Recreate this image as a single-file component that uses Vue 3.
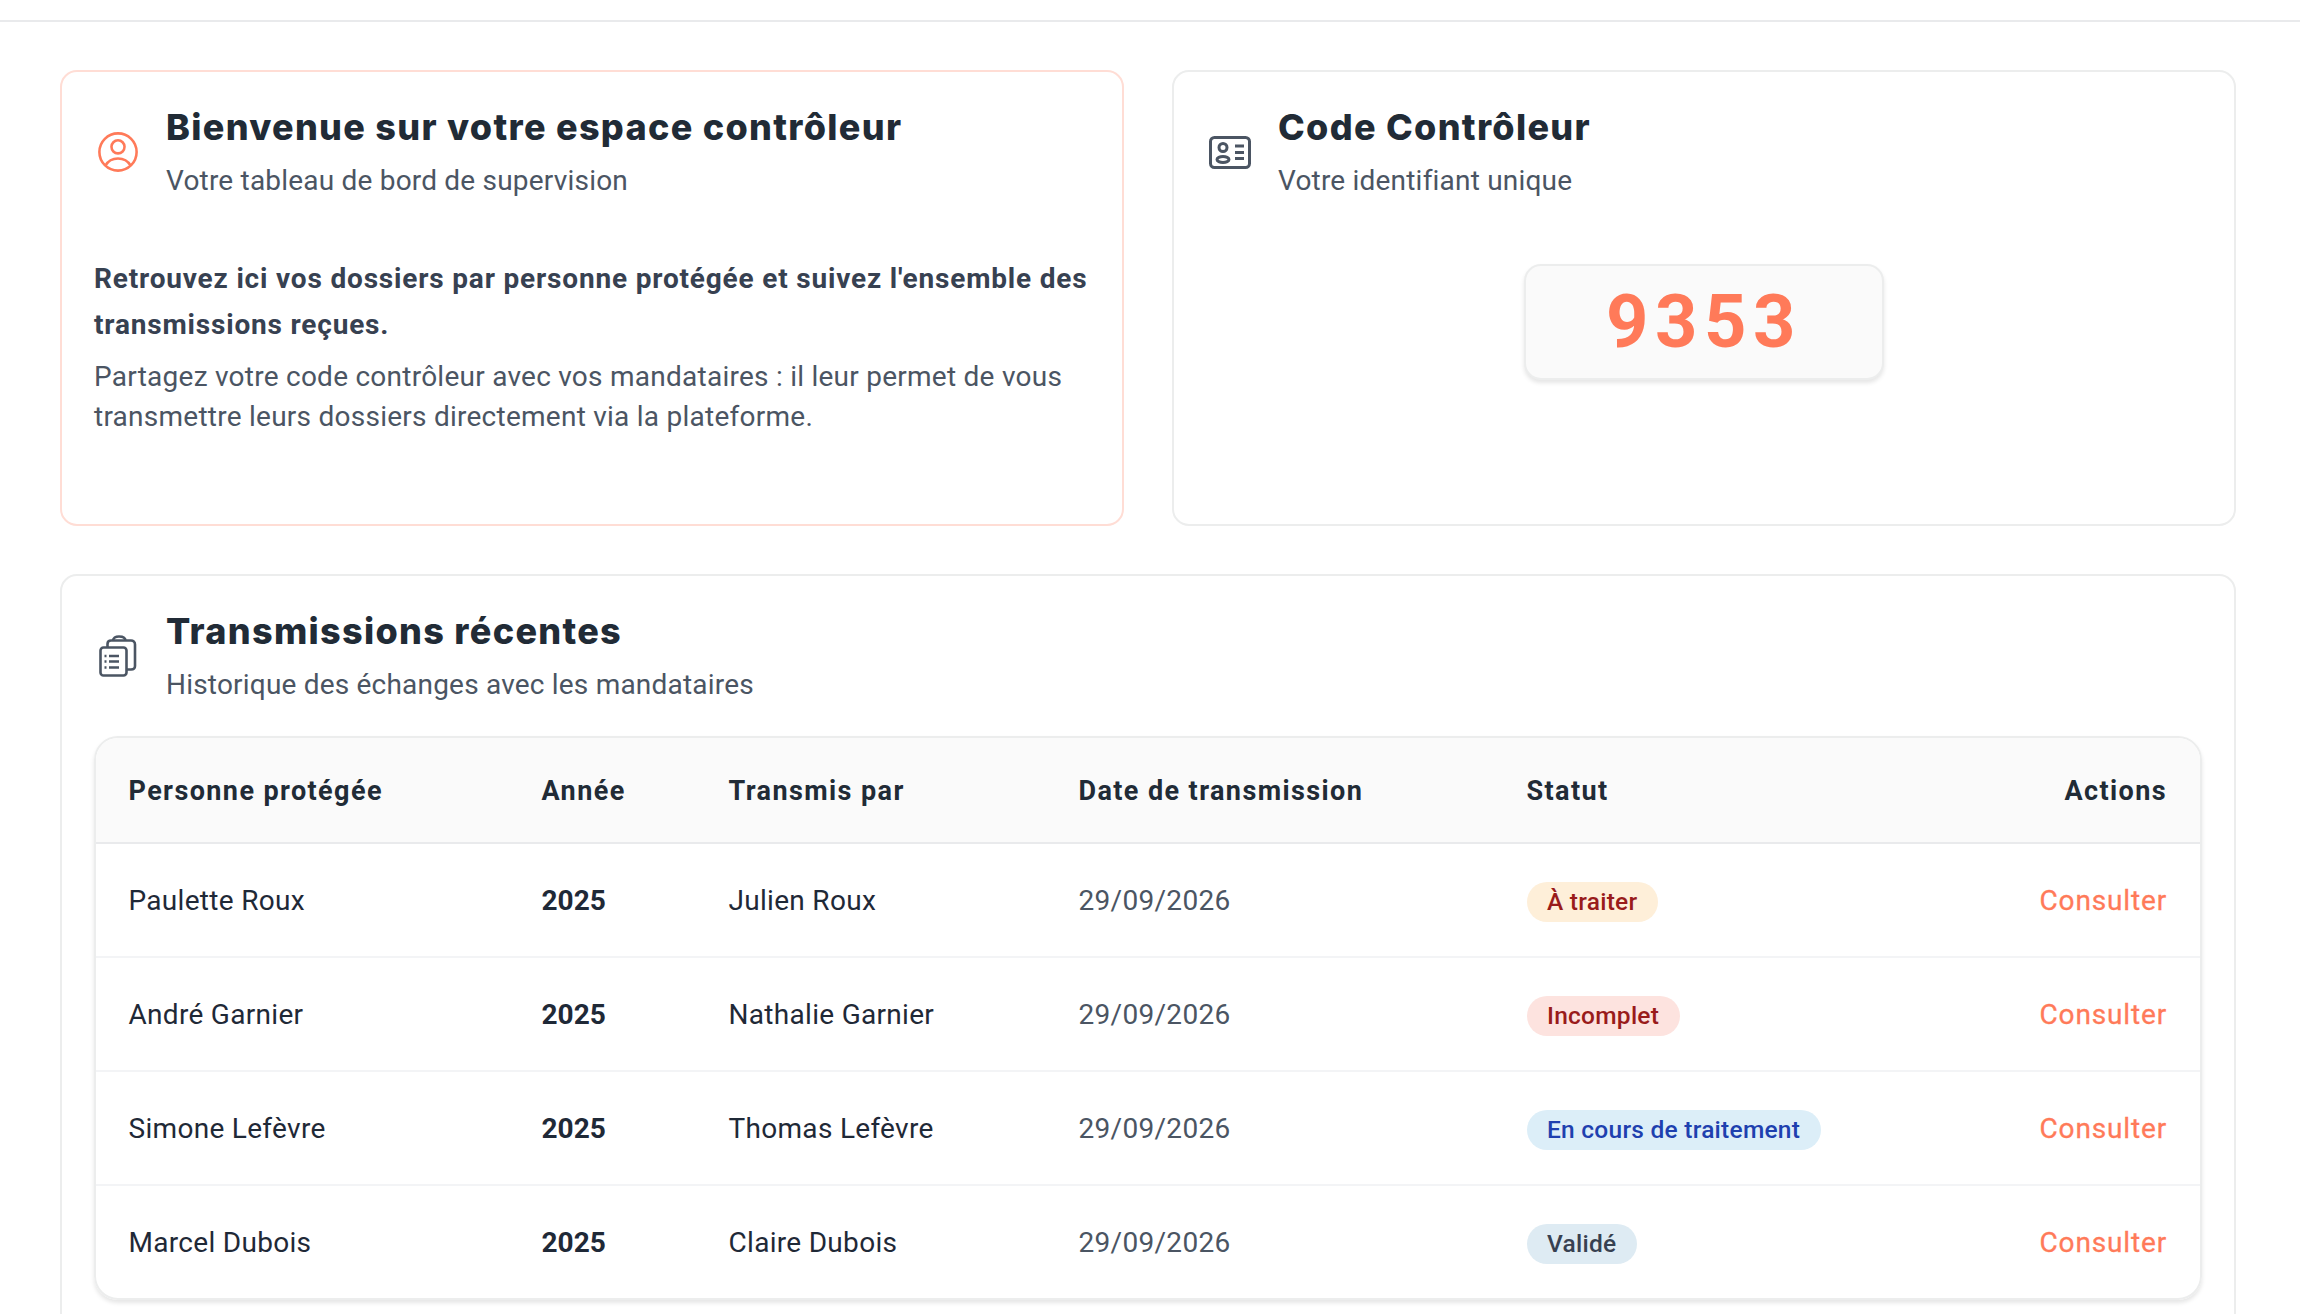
<script setup>
const rows = [
  { name: 'Paulette Roux', by: 'Julien Roux', status: 'À traiter', kind: 'todo' },
  { name: 'André Garnier', by: 'Nathalie Garnier', status: 'Incomplet', kind: 'bad' },
  { name: 'Simone Lefèvre', by: 'Thomas Lefèvre', status: 'En cours de traitement', kind: 'prog' },
  { name: 'Marcel Dubois', by: 'Claire Dubois', status: 'Validé', kind: 'ok' },
]
</script>

<template>
  <div class="page">
    <div class="topbar"></div>
    <main class="main">
      <div class="cards">
        <section class="card card-accent">
          <header class="head">
            <div class="icon">
              <svg width="40" height="40" viewBox="27 27 202 202" fill="none" stroke="#ff7a59" stroke-width="13">
                <circle cx="128" cy="128" r="94" />
                <circle cx="128" cy="102" r="33" />
                <path d="M64 197C78 173 104 161 128 161C152 161 178 173 192 197" />
              </svg>
            </div>
            <div>
              <h2 class="title">Bienvenue sur votre espace contrôleur</h2>
              <p class="sub">Votre tableau de bord de supervision</p>
            </div>
          </header>
          <p class="lead">Retrouvez ici vos dossiers par personne protégée et suivez l'ensemble des transmissions reçues.</p>
          <p class="body">Partagez votre code contrôleur avec vos mandataires : il leur permet de vous transmettre leurs dossiers directement via la plateforme.</p>
        </section>

        <section class="card">
          <header class="head">
            <div class="icon">
              <svg width="44" height="35" viewBox="0 0 44 35" fill="none" stroke="#4b5563" stroke-width="3">
                <rect x="2.5" y="2.5" width="39" height="30" rx="4" />
                <circle cx="15" cy="12.5" r="4" />
                <ellipse cx="15" cy="24.5" rx="6" ry="3" />
                <path d="M27 11H36M27 17.5H36M27 23.5H36" />
              </svg>
            </div>
            <div>
              <h2 class="title">Code Contrôleur</h2>
              <p class="sub">Votre identifiant unique</p>
            </div>
          </header>
          <div class="code-wrap">
            <div class="code">9353</div>
          </div>
        </section>
      </div>

      <section class="card recent">
        <header class="head">
          <div class="icon">
            <svg width="40" height="42" viewBox="0 0 40 42" fill="none" stroke="#4b5563" stroke-width="2.6" stroke-linejoin="round">
              <rect x="2.5" y="12.5" width="26" height="28" rx="3" />
              <path d="M9.5 12V9C9.5 6.5 11 5.5 13 5.5H33C35 5.5 37 7 37 9.5V31C37 33 35.5 34.5 33 34.5H29" />
              <path d="M15 6C15 3 17.5 1.5 21 1.5C25 1.5 27.5 3 27.5 6" />
              <path d="M11 21H21M11 26.5H21M11 32.5H21" />
              <path d="M6.5 21H8.5M6.5 26.5H8.5M6.5 32.5H8.5" />
            </svg>
          </div>
          <div>
            <h2 class="title">Transmissions récentes</h2>
            <p class="sub">Historique des échanges avec les mandataires</p>
          </div>
        </header>

        <div class="table-box">
          <table class="table">
            <colgroup>
              <col class="c1" /><col class="c2" /><col class="c3" /><col class="c4" /><col class="c5" /><col />
            </colgroup>
            <thead>
              <tr>
                <th>Personne protégée</th>
                <th>Année</th>
                <th>Transmis par</th>
                <th>Date de transmission</th>
                <th>Statut</th>
                <th class="right">Actions</th>
              </tr>
            </thead>
            <tbody>
              <tr v-for="r in rows" :key="r.name">
                <td class="name">{{ r.name }}</td>
                <td class="year">2025</td>
                <td class="name">{{ r.by }}</td>
                <td class="date">29/09/2026</td>
                <td><span class="badge" :class="r.kind">{{ r.status }}</span></td>
                <td class="right"><a class="link">Consulter</a></td>
              </tr>
            </tbody>
          </table>
        </div>
      </section>
    </main>
  </div>
</template>

<style scoped>
.page {
  font-family: Roboto, "Liberation Sans", sans-serif;
  background: #fff;
  color: #1f2937;
  height: 1314px;
  overflow: hidden;
}
.topbar {
  height: 22px;
  border-bottom: 2px solid #e9eaec;
  box-sizing: border-box;
}
.main {
  padding: 48px 64px 0 60px;
}
.cards {
  display: grid;
  grid-template-columns: 1fr 1fr;
  gap: 48px;
}
.card {
  border: 2px solid #eceded;
  border-radius: 17px;
  padding: 31px 32px 87px;
  background: #fff;
}
.card-accent {
  border-color: #ffddd5;
}
.recent {
  margin-top: 48px;
  padding-bottom: 40px;
}
.head {
  display: flex;
  align-items: center;
  gap: 24px;
}
.icon {
  width: 48px;
  display: flex;
  justify-content: center;
  flex: none;
}
.title {
  margin: 0;
  font-family: Inter, Roboto, sans-serif;
  font-weight: 800;
  font-size: 36px;
  line-height: 48px;
  letter-spacing: 1.3px;
  color: #212b36;
}
.sub {
  margin: 10px 0 0;
  font-size: 28px;
  line-height: 40px;
  color: #4b5563;
  letter-spacing: 0.2px;
}
.lead {
  margin: 55px 0 0;
  font-weight: 700;
  font-size: 28px;
  line-height: 46px;
  letter-spacing: 0.82px;
  color: #374151;
}
.body {
  margin: 9px 0 0;
  font-size: 28px;
  line-height: 40px;
  letter-spacing: 0.25px;
  color: #4b5563;
}
.code-wrap {
  margin-top: 63px;
  display: flex;
  justify-content: center;
}
.code {
  width: 360px;
  height: 116px;
  box-sizing: border-box;
  padding-bottom: 2px;
  display: flex;
  align-items: center;
  justify-content: center;
  background: #fafafa;
  border: 2px solid #eceded;
  border-radius: 17px;
  box-shadow: 0 3px 4px rgba(0, 0, 0, 0.1);
  font-weight: 700;
  font-size: 74px;
  letter-spacing: 6.5px;
  color: #ff7a59;
}
.table-box {
  margin-top: 31px;
  border: 2px solid #eceded;
  border-radius: 24px;
  overflow: hidden;
  box-shadow: 0 3px 4px rgba(0, 0, 0, 0.1);
}
.table {
  width: 100%;
  table-layout: fixed;
  border-collapse: separate;
  border-spacing: 0;
}
.c1 { width: 413px; }
.c2 { width: 187px; }
.c3 { width: 350px; }
.c4 { width: 448px; }
.c5 { width: 400px; }
th {
  height: 102px;
  padding: 2px 33px 0 32.5px;
  text-align: left;
  background: #fafafa;
  border-bottom: 2px solid #e9eaec;
  font-weight: 700;
  font-size: 27px;
  letter-spacing: 1.4px;
  color: #212b36;
  white-space: nowrap;
}
td {
  height: 112px;
  padding: 0 33px 0 32.5px;
  border-bottom: 2px solid #f3f4f6;
  font-size: 28px;
  letter-spacing: 0.3px;
  white-space: nowrap;
}
tbody tr:last-child td {
  border-bottom: none;
}
.right {
  text-align: right;
}
.name { color: #1f2937; }
.year { font-weight: 700; color: #1f2937; letter-spacing: 0; }
.date { color: #4b5563; }
.badge {
  display: inline-flex;
  align-items: center;
  height: 40px;
  margin-top: 3px;
  padding: 0 20.5px;
  border-radius: 20px;
  font-size: 24.5px;
  font-weight: 500;
  letter-spacing: 0.25px;
  vertical-align: middle;
}
.todo { background: #feefd9; color: #991b1b; }
.bad { background: #fde3df; color: #991b1b; }
.prog { background: #dceef8; color: #1e40af; }
.ok { background: #deebf3; color: #374151; }
.link {
  color: #ff7a59;
  font-weight: 400;
  letter-spacing: 0.85px;
  -webkit-text-stroke: 0.3px #ff7a59;
}
</style>

<style>
html, body { margin: 0; overflow: hidden; }
</style>
